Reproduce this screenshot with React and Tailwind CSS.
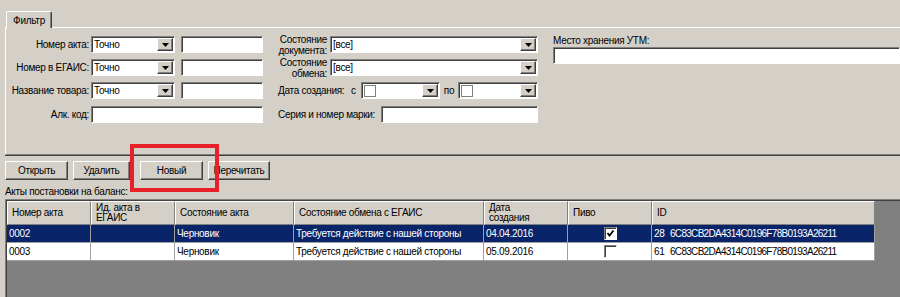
import React from 'react';

const font = { fontFamily: '"Liberation Sans", Arial, sans-serif' };

const raised =
  'bg-[#d4d0c8] border border-t-white border-l-white border-b-[#404040] border-r-[#404040] shadow-[inset_-1px_-1px_0_#808080]';
const sunken =
  'bg-white border border-t-[#808080] border-l-[#808080] border-b-white border-r-white shadow-[inset_1px_1px_0_#404040]';

const Arrow = () => (
  <svg width="7" height="4" viewBox="0 0 7 4">
    <polygon points="0,0 7,0 3.5,4" fill="#000" />
  </svg>
);

const DropBtn = () => (
  <div className={`${raised} w-[16px] h-[13px] flex items-center justify-center shrink-0`}>
    <Arrow />
  </div>
);

const Combo = ({ w, value }) => (
  <div className={`${sunken} ${w} h-[17px] flex items-center pl-[2px] pr-[1px]`}>
    <span className="flex-1 leading-[13px] truncate">{value}</span>
    <DropBtn />
  </div>
);

const DatePick = ({ w }) => (
  <div className={`${sunken} ${w} h-[17px] flex items-center pl-[2px] pr-[1px]`}>
    <div className="w-[12px] h-[12px] border border-[#808080] bg-white shrink-0" />
    <span className="flex-1" />
    <DropBtn />
  </div>
);

const Input = ({ w }) => <div className={`${sunken} ${w} h-[17px]`} />;

const Button = ({ w, ml, children }) => (
  <div className={`${raised} ${w} ${ml} h-[19px] flex items-center justify-center`}>{children}</div>
);

const Check = ({ checked }) => (
  <div className={`${sunken} w-[13px] h-[13px] flex items-center justify-center`}>
    {checked && (
      <svg width="9" height="9" viewBox="0 0 9 9">
        <path d="M1.5 4 L3.5 6.5 L7.5 1.5" stroke="#000" strokeWidth="1.8" fill="none" />
      </svg>
    )}
  </div>
);

const cols = [
  { title: 'Номер акта', w: 'w-[84px]' },
  { title: 'Ид. акта в\nЕГАИС', w: 'w-[84px]' },
  { title: 'Состояние акта', w: 'w-[119px]' },
  { title: 'Состояние обмена с ЕГАИС', w: 'w-[190px]' },
  { title: 'Дата\nсоздания', w: 'w-[84px]' },
  { title: 'Пиво', w: 'w-[84px]' },
  { title: 'ID', w: 'w-[223px]' },
];

const rows = [
  { n: '0002', state: 'Черновик', ex: 'Требуется действие с нашей стороны', date: '04.04.2016', beer: true, num: '28', id: '6C83CB2DA4314C0196F78B0193A26211', sel: true },
  { n: '0003', state: 'Черновик', ex: 'Требуется действие с нашей стороны', date: '05.09.2016', beer: false, num: '61', id: '6C83CB2DA4314C0196F78B0193A26211', sel: false },
];

export default function App() {
  return (
    <div className="relative w-[900px] h-[297px] overflow-hidden bg-[#d4d0c8] text-[10px] tracking-[-0.3px] whitespace-nowrap text-black flex flex-col" style={font}>
      {/* Tab */}
      <div className="pt-[11px] pl-[6px]">
        <div className="relative z-10 w-[46px] h-[17px] -mb-[1px] bg-[#d4d0c8] border-t border-l border-white border-r border-r-[#404040] shadow-[inset_-1px_0_0_#808080] rounded-t-[2px] flex items-center justify-center">
          Фильтр
        </div>
      </div>

      {/* Filter panel */}
      <div className="ml-[5px] h-[128px] border-t border-l border-white border-b border-b-[#808080] shadow-[0_1px_0_#404040] pt-[8px] flex">
        {/* left block */}
        <div className="flex flex-col gap-[6px]">
          <div className="flex items-center">
            <div className="w-[83px] mr-[2px] text-right">Номер акта:</div>
            <Combo w="w-[84px]" value="Точно" />
            <Input w="w-[82px] ml-[6px]" />
          </div>
          <div className="flex items-center">
            <div className="w-[83px] mr-[2px] text-right">Номер в ЕГАИС:</div>
            <Combo w="w-[84px]" value="Точно" />
            <Input w="w-[82px] ml-[6px]" />
          </div>
          <div className="flex items-center">
            <div className="w-[83px] mr-[2px] text-right">Название товара:</div>
            <Combo w="w-[84px]" value="Точно" />
            <Input w="w-[82px] ml-[6px]" />
          </div>
          <div className="flex items-center mt-[1px]">
            <div className="w-[83px] mr-[2px] text-right">Алк. код:</div>
            <Input w="w-[172px]" />
          </div>
        </div>

        {/* middle block */}
        <div className="ml-[14px] flex flex-col gap-[6px]">
          <div className="flex items-center">
            <div className="w-[50px] text-right leading-[11px] -my-[3px]">Состояние<br />документа:</div>
            <Combo w="w-[208px] ml-[3px]" value="[все]" />
          </div>
          <div className="flex items-center">
            <div className="w-[50px] text-right leading-[11px] -my-[3px]">Состояние<br />обмена:</div>
            <Combo w="w-[208px] ml-[3px]" value="[все]" />
          </div>
          <div className="flex items-center">
            <div className="pl-[1px] w-[74px]">Дата создания:</div>
            <div className="w-[10px]">с</div>
            <DatePick w="w-[79px]" />
            <div className="w-[18px] text-center">по</div>
            <DatePick w="w-[80px]" />
          </div>
          <div className="flex items-center mt-[1px]">
            <div className="pl-[1px] w-[104px]">Серия и номер марки:</div>
            <Input w="w-[157px]" />
          </div>
        </div>

        {/* right block */}
        <div className="ml-[15px] flex-1 flex flex-col">
          <div className="leading-[12px] -mt-[1px]">Место хранения УТМ:</div>
          <Input w="w-full" />
        </div>
      </div>

      {/* Buttons */}
      <div className="mt-[6px] flex">
        <Button w="w-[63px]" ml="ml-[5px]">Открыть</Button>
        <Button w="w-[57px]" ml="ml-[5px]">Удалить</Button>
        <Button w="w-[63px]" ml="ml-[10px]">Новый</Button>
        <Button w="w-[62px]" ml="ml-[5px]">Перечитать</Button>
      </div>

      <div className="pt-[5px] pl-[5px] leading-[13px] h-[19px]">Акты постановки на баланс:</div>

      {/* Grid */}
      <div className="ml-[5px] flex-1 bg-[#808080] border-t border-l border-[#808080] shadow-[inset_1px_1px_0_#404040] pt-[1px] pl-[1px]">
        <div className="flex h-[24px]">
          {cols.map((c) => (
            <div
              key={c.title}
              className={`${c.w} bg-[#d4d0c8] border-l border-t border-white border-r border-r-[#808080] border-b border-b-[#808080] pl-[4px] flex items-center whitespace-pre-line leading-[10px]`}
            >
              {c.title}
            </div>
          ))}
        </div>
        {rows.map((r) => {
          const cell = `border-r border-b border-[#a0a0a0] pl-[2px] flex items-center ${r.sel ? 'bg-[#0a246a] text-white' : 'bg-white text-black'}`;
          return (
            <div key={r.n} className="flex h-[18px]">
              <div className={`${cell} w-[84px]`}>{r.n}</div>
              <div className={`${cell} w-[84px]`}></div>
              <div className={`${cell} w-[119px]`}>{r.state}</div>
              <div className={`${cell} w-[190px]`}>{r.ex}</div>
              <div className={`${cell} w-[84px]`}>{r.date}</div>
              <div className={`${cell} w-[84px] justify-center`}><Check checked={r.beer} /></div>
              <div className={`${cell} w-[223px]`}>
                <span className="w-[16px]">{r.num}</span>
                <span className="tracking-[-0.7px]">{r.id}</span>
              </div>
            </div>
          );
        })}
      </div>

      {/* red highlight */}
      <div className="absolute left-[130px] top-[144px] w-[89px] h-[48px] border-[4px] border-[#e8202a]" />
    </div>
  );
}
